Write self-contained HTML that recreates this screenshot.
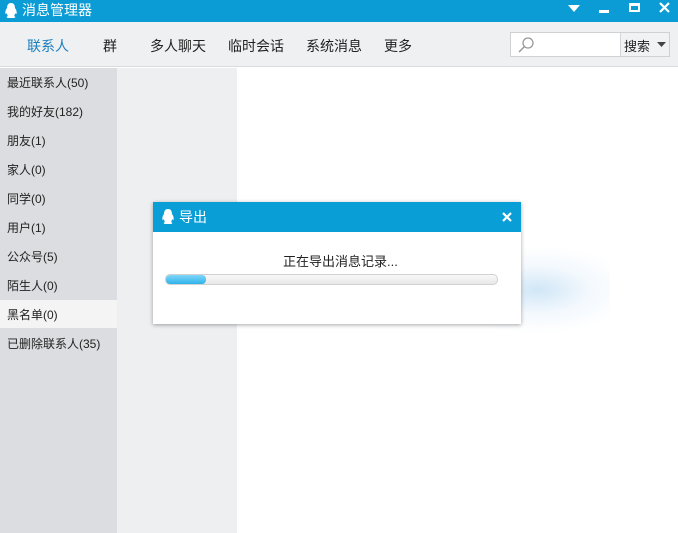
<!DOCTYPE html>
<html><head><meta charset="utf-8"><style>
*{margin:0;padding:0;box-sizing:border-box}
body{width:678px;height:533px;overflow:hidden;position:relative;background:#fff;font-family:"Liberation Sans","Noto Sans CJK SC",sans-serif;font-size:13px;color:#222}
.title{position:absolute;left:0;top:0;width:678px;height:22px;background:#0b9cd5;color:#fff;font-size:14px}
.tb{position:absolute;left:0;top:22px;width:678px;height:45px;background:#eef0f1;border-bottom:1px solid #d8dadc}
.tab{position:absolute;top:14px;font-size:14px;color:#222}
.side{position:absolute;left:0;top:68px;width:117px;height:465px;background:#dcdde0}
.mid{position:absolute;left:117px;top:68px;width:120px;height:465px;background:#eeeff0}
.it{position:absolute;left:7px;font-size:12px;color:#222}
.sel{position:absolute;left:0;top:300px;width:117px;height:28px;background:#f4f4f5}
.dlg{position:absolute;left:153px;top:202px;width:368px;height:122px;background:#fff;box-shadow:0 1px 4px rgba(0,0,0,.35)}
.dh{height:30px;background:#0a9ed6;color:#fff;font-size:14px;position:relative}
</style></head><body>
<div class="title">
<svg style="position:absolute;left:4px;top:2px" width="14" height="17" viewBox="0 0 14 17"><path d="M7 1C4 1 3 3.5 3 6C1.5 8 1 10 1.5 12C2.5 12 3 11 3 11C3 13 4 14 4 14C2.5 14.5 2 15.5 4 16H10C12 15.5 11.5 14.5 10 14C10 14 11 13 11 11C11 11 11.5 12 12.5 12C13 10 12.5 8 11 6C11 3.5 10 1 7 1Z" fill="#fff"/></svg>
<span style="position:absolute;left:22px;top:0px">消息管理器</span>
<svg style="position:absolute;left:568px;top:5px" width="12" height="8"><path d="M0 0H12L6 7Z" fill="#fff"/></svg>
<div style="position:absolute;left:599px;top:10px;width:10px;height:3px;background:#fff"></div>
<div style="position:absolute;left:629px;top:3px;width:11px;height:9px;border:2px solid #fff;border-top-width:3px"></div>
<svg style="position:absolute;left:659px;top:2px" width="11" height="11"><path d="M1 1L10 10M10 1L1 10" stroke="#fff" stroke-width="2.2"/></svg>
</div>
<div class="tb">
<span class="tab" style="left:27px;color:#1b7fc0">联系人</span>
<span class="tab" style="left:103px">群</span>
<span class="tab" style="left:150px">多人聊天</span>
<span class="tab" style="left:228px">临时会话</span>
<span class="tab" style="left:306px">系统消息</span>
<span class="tab" style="left:384px">更多</span>
<div style="position:absolute;left:510px;top:10px;width:160px;height:25px;background:#fff;border:1px solid #cfd1d3"></div>
<div style="position:absolute;left:620px;top:11px;width:49px;height:23px;background:#f1f2f3;border-left:1px solid #d3d5d7"></div>
<svg style="position:absolute;left:517px;top:14px" width="18" height="18"><circle cx="11" cy="7" r="5" fill="none" stroke="#999" stroke-width="1.3"/><path d="M7.5 10.5L2 16" stroke="#999" stroke-width="1.5"/></svg>
<span style="position:absolute;left:624px;top:14px;font-size:13px">搜索</span>
<svg style="position:absolute;left:657px;top:20px" width="9" height="6"><path d="M0 0H9L4.5 5Z" fill="#444"/></svg>
</div>
<div class="side"></div><div class="mid"></div>
<div class="sel"></div>
<span class="it" style="top:74px">最近联系人(50)</span>
<span class="it" style="top:103px">我的好友(182)</span>
<span class="it" style="top:132px">朋友(1)</span>
<span class="it" style="top:161px">家人(0)</span>
<span class="it" style="top:190px">同学(0)</span>
<span class="it" style="top:219px">用户(1)</span>
<span class="it" style="top:248px">公众号(5)</span>
<span class="it" style="top:277px">陌生人(0)</span>
<span class="it" style="top:306px">黑名单(0)</span>
<span class="it" style="top:335px">已删除联系人(35)</span>
<div style="position:absolute;left:420px;top:235px;width:190px;height:110px;background:radial-gradient(ellipse 50% 40% at 62% 50%,rgba(170,210,240,.55),rgba(210,230,248,.25) 55%,rgba(255,255,255,0) 100%)"></div>
<div class="dlg">
<div class="dh">
<svg style="position:absolute;left:8px;top:6px" width="14" height="17" viewBox="0 0 14 17"><path d="M7 1C4 1 3 3.5 3 6C1.5 8 1 10 1.5 12C2.5 12 3 11 3 11C3 13 4 14 4 14C2.5 14.5 2 15.5 4 16H10C12 15.5 11.5 14.5 10 14C10 14 11 13 11 11C11 11 11.5 12 12.5 12C13 10 12.5 8 11 6C11 3.5 10 1 7 1Z" fill="#fff"/></svg>
<span style="position:absolute;left:26px;top:5px">导出</span>
<svg style="position:absolute;left:349px;top:10px" width="10" height="10"><path d="M1 1L9 9M9 1L1 9" stroke="#fff" stroke-width="2.2"/></svg>
</div>
<span style="position:absolute;left:130px;top:49px;font-size:13px">正在导出消息记录...</span>
<div style="position:absolute;left:12px;top:72px;width:333px;height:11px;border:1px solid #cfd1d3;border-radius:5px;background:linear-gradient(#f8f8f8,#e8e8e8)"></div>
<div style="position:absolute;left:13px;top:73px;width:40px;height:9px;border-radius:4px;background:linear-gradient(#7fd6f8,#2fb3ea)"></div>
</div>
</body></html>
